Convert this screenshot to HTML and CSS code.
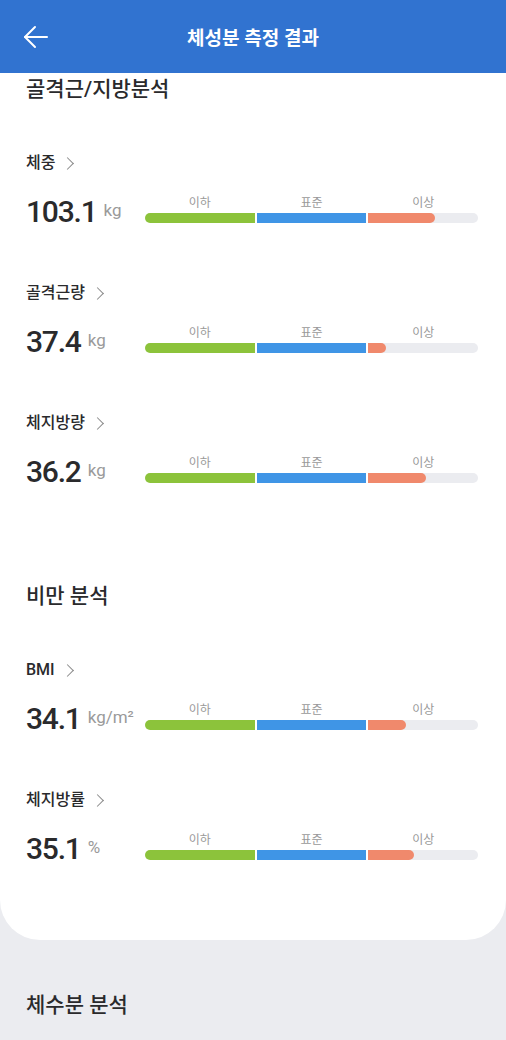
FILE: index.html
```html
<!DOCTYPE html>
<html lang="ko">

<head>
    <meta charset="UTF-8">
    <meta name="viewport" content="width=device-width, initial-scale=1.0">
    <title>체성분 측정 결과</title>
    <link rel="stylesheet" href="styles.css">
</head>

<body>
    <header class="topBar">
        <button class="backButton" type="button" aria-label="뒤로">
            <svg width="26" height="26" viewBox="0 0 26 26" fill="none" stroke="#ffffff" stroke-width="2"
                stroke-linecap="round" stroke-linejoin="round">
                <line x1="2" y1="13" x2="24" y2="13" />
                <polyline points="12,3 2,13 12,23" />
            </svg>
        </button>
        <h1>체성분 측정 결과</h1>
    </header>

    <div class="card">
        <h2 class="sectionTitle">골격근/지방분석</h2>

        <div class="metric">
            <div class="metricName">체중 <span class="chevron"></span></div>
            <div class="metricRow">
                <div class="metricValue">103.1<span class="unit">kg</span></div>
                <div class="range">
                    <div class="rangeLabels"><span>이하</span><span>표준</span><span>이상</span></div>
                    <div class="rangeBar">
                        <div class="seg low"></div>
                        <div class="seg mid"></div>
                        <div class="seg high"><div class="fill" style="width: 61%;"></div></div>
                    </div>
                </div>
            </div>
        </div>

        <div class="metric">
            <div class="metricName">골격근량 <span class="chevron"></span></div>
            <div class="metricRow">
                <div class="metricValue">37.4<span class="unit">kg</span></div>
                <div class="range">
                    <div class="rangeLabels"><span>이하</span><span>표준</span><span>이상</span></div>
                    <div class="rangeBar">
                        <div class="seg low"></div>
                        <div class="seg mid"></div>
                        <div class="seg high"><div class="fill" style="width: 16%;"></div></div>
                    </div>
                </div>
            </div>
        </div>

        <div class="metric">
            <div class="metricName">체지방량 <span class="chevron"></span></div>
            <div class="metricRow">
                <div class="metricValue">36.2<span class="unit">kg</span></div>
                <div class="range">
                    <div class="rangeLabels"><span>이하</span><span>표준</span><span>이상</span></div>
                    <div class="rangeBar">
                        <div class="seg low"></div>
                        <div class="seg mid"></div>
                        <div class="seg high"><div class="fill" style="width: 53%;"></div></div>
                    </div>
                </div>
            </div>
        </div>

        <h2 class="sectionTitle spaced">비만 분석</h2>

        <div class="metric">
            <div class="metricName">BMI <span class="chevron"></span></div>
            <div class="metricRow">
                <div class="metricValue">34.1<span class="unit">kg/m²</span></div>
                <div class="range">
                    <div class="rangeLabels"><span>이하</span><span>표준</span><span>이상</span></div>
                    <div class="rangeBar">
                        <div class="seg low"></div>
                        <div class="seg mid"></div>
                        <div class="seg high"><div class="fill" style="width: 34%;"></div></div>
                    </div>
                </div>
            </div>
        </div>

        <div class="metric">
            <div class="metricName">체지방률 <span class="chevron"></span></div>
            <div class="metricRow">
                <div class="metricValue">35.1<span class="unit">%</span></div>
                <div class="range">
                    <div class="rangeLabels"><span>이하</span><span>표준</span><span>이상</span></div>
                    <div class="rangeBar">
                        <div class="seg low"></div>
                        <div class="seg mid"></div>
                        <div class="seg high"><div class="fill" style="width: 42%;"></div></div>
                    </div>
                </div>
            </div>
        </div>
    </div>

    <h2 class="sectionTitle outside">체수분 분석</h2>
</body>

</html>
```

FILE: styles.css
```css
body {
    font-family: Roboto, "Noto Sans CJK KR", sans-serif;
    margin: 0;
    background-color: #ebecf0;
    color: #2a2a2c;
}

.topBar {
    height: 73px;
    background-color: #3173d0;
    display: flex;
    align-items: center;
    justify-content: center;
    position: relative;
}

.topBar h1 {
    margin: 0;
    color: #ffffff;
    font-size: 19px;
    font-weight: 700;
}

.backButton {
    position: absolute;
    left: 23px;
    top: 24px;
    padding: 0;
    border: none;
    background: none;
    display: flex;
}

.card {
    background-color: #ffffff;
    border-radius: 0 0 40px 40px;
    padding: 0 28px 71px 26px;
}

.sectionTitle {
    margin: 0;
    font-size: 21px;
    font-weight: 500;
    line-height: 32px;
}

.sectionTitle.spaced {
    margin-top: 88px;
}

.sectionTitle.outside {
    margin: 49px 26px 0;
}

.metric {
    margin-top: 46px;
}

.metric + .metric {
    margin-top: 49px;
}

.metricName {
    font-size: 16px;
    font-weight: 500;
    line-height: 24px;
    display: flex;
    align-items: center;
}

.chevron {
    width: 8px;
    height: 8px;
    border-right: 1.5px solid #8a8a8a;
    border-bottom: 1.5px solid #8a8a8a;
    transform: rotate(-45deg);
    margin-left: 8px;
}

.metricRow {
    display: flex;
    height: 40px;
    margin-top: 17px;
}

.metricValue {
    width: 119px;
    font-size: 30px;
    font-weight: 500;
    letter-spacing: -1.2px;
    line-height: 40px;
    display: flex;
    align-items: flex-start;
}

.unit {
    font-size: 17px;
    font-weight: 400;
    letter-spacing: 0;
    color: #9a9a9a;
    line-height: 20px;
    margin-top: 8px;
    margin-left: 7px;
}

.range {
    flex: 1;
    padding-top: 4px;
}

.rangeLabels {
    display: flex;
    gap: 2px;
    font-size: 12px;
    line-height: 14px;
    color: #999999;
    font-weight: 400;
}

.rangeLabels span {
    flex: 1;
    text-align: center;
}

.rangeBar {
    display: flex;
    gap: 2px;
    height: 10px;
    margin-top: 3px;
}

.seg {
    flex: 1;
}

.seg.low {
    background-color: #8cc33b;
    border-radius: 5px 0 0 5px;
}

.seg.mid {
    background-color: #3f95e6;
}

.seg.high {
    background-color: #ebecf0;
    border-radius: 0 5px 5px 0;
}

.fill {
    height: 100%;
    background-color: #f0896c;
    border-radius: 0 5px 5px 0;
}
```
